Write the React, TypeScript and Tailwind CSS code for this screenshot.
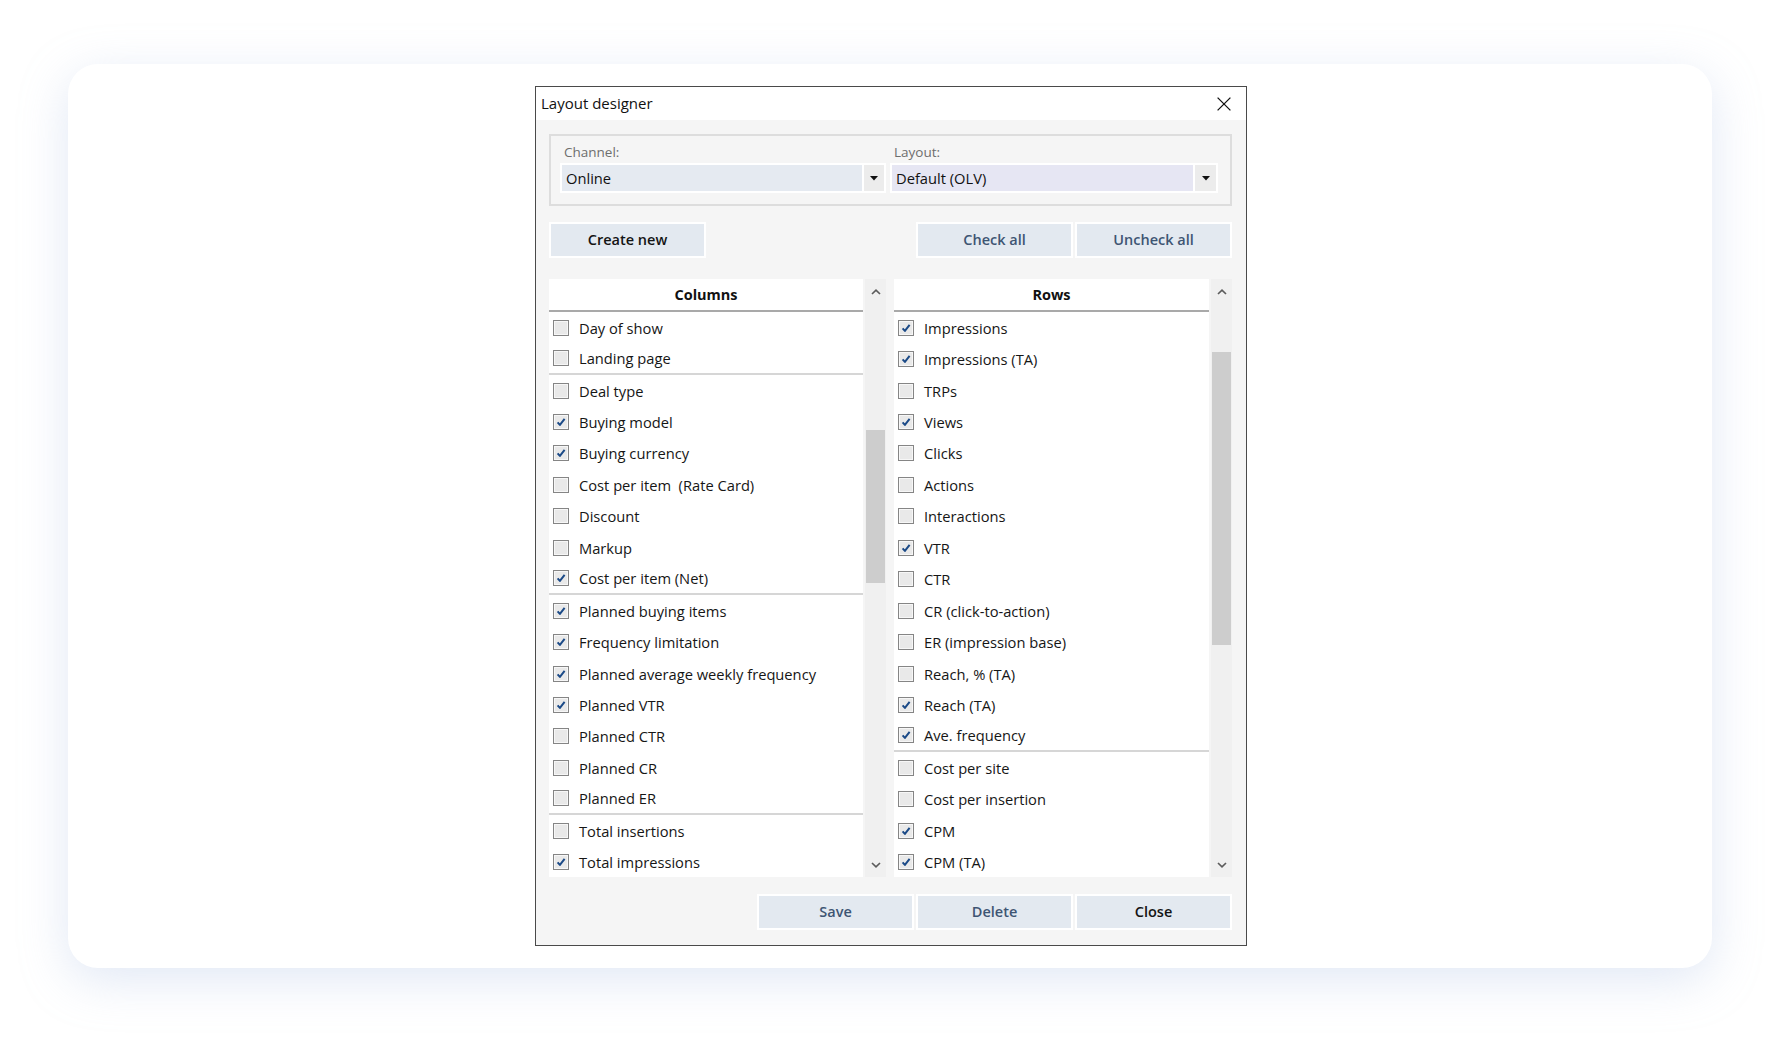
import React from "react";

type Item = { label: string; checked: boolean; sep?: boolean };

const columns: Item[] = [
  { label: "Day of show", checked: false },
  { label: "Landing page", checked: false, sep: true },
  { label: "Deal type", checked: false },
  { label: "Buying model", checked: true },
  { label: "Buying currency", checked: true },
  { label: "Cost per item  (Rate Card)", checked: false },
  { label: "Discount", checked: false },
  { label: "Markup", checked: false },
  { label: "Cost per item (Net)", checked: true, sep: true },
  { label: "Planned buying items", checked: true },
  { label: "Frequency limitation", checked: true },
  { label: "Planned average weekly frequency", checked: true },
  { label: "Planned VTR", checked: true },
  { label: "Planned CTR", checked: false },
  { label: "Planned CR", checked: false },
  { label: "Planned ER", checked: false, sep: true },
  { label: "Total insertions", checked: false },
  { label: "Total impressions", checked: true },
];

const rows: Item[] = [
  { label: "Impressions", checked: true },
  { label: "Impressions (TA)", checked: true },
  { label: "TRPs", checked: false },
  { label: "Views", checked: true },
  { label: "Clicks", checked: false },
  { label: "Actions", checked: false },
  { label: "Interactions", checked: false },
  { label: "VTR", checked: true },
  { label: "CTR", checked: false },
  { label: "CR (click-to-action)", checked: false },
  { label: "ER (impression base)", checked: false },
  { label: "Reach, % (TA)", checked: false },
  { label: "Reach (TA)", checked: true },
  { label: "Ave. frequency", checked: true, sep: true },
  { label: "Cost per site", checked: false },
  { label: "Cost per insertion", checked: false },
  { label: "CPM", checked: true },
  { label: "CPM (TA)", checked: true },
];

function CheckBox({ checked }: { checked: boolean }) {
  return (
    <span className="flex h-[16px] w-[16px] shrink-0 items-center justify-center border border-[#858585] bg-[#e9e9e9] shadow-[inset_0_0_0_1px_#f7f7f7]">
      {checked && (
        <svg width="12" height="12" viewBox="0 0 12 12">
          <path d="M2.6 6.3 L4.9 8.9 L9.6 2.9" fill="none" stroke="#1b4a87" strokeWidth="2" strokeLinejoin="round" />
        </svg>
      )}
    </span>
  );
}

function Row({ item }: { item: Item }) {
  return (
    <div
      className={
        item.sep
          ? "flex h-[31.45px] shrink-0 items-center gap-[10px] border-b-2 border-[#d6d6d6] pl-[4px]"
          : "flex h-[31.45px] shrink-0 items-center gap-[10px] pl-[4px]"
      }
    >
      <CheckBox checked={item.checked} />
      <span className="whitespace-pre text-[14.7px] text-[#161616]">{item.label}</span>
    </div>
  );
}

function Chevron({ up }: { up: boolean }) {
  return (
    <svg width="10" height="6" viewBox="0 0 10 6">
      <path d={up ? "M1 5 L5 1.2 L9 5" : "M1 1 L5 4.8 L9 1"} fill="none" stroke="#5c5c5c" strokeWidth="1.7" />
    </svg>
  );
}

function ListPanel({ title, items, wide }: { title: string; items: Item[]; wide?: boolean }) {
  return (
    <div className={wide ? "flex w-[315px] flex-col overflow-hidden bg-white" : "flex w-[314px] flex-col overflow-hidden bg-white"}>
      <div className="flex h-[31px] shrink-0 items-center justify-center text-[14.5px] font-bold text-[#111]">{title}</div>
      <div className="h-[2px] shrink-0 bg-[#a9a9a9]" />
      {items.map((it) => (
        <Row key={it.label} item={it} />
      ))}
    </div>
  );
}

function Btn({ label, dark }: { label: string; dark?: boolean }) {
  return (
    <div
      className={
        dark
          ? "flex h-[36px] w-[157px] items-center justify-center border-2 border-white bg-[#e3e9f0] text-[14.5px] font-semibold text-[#141414]"
          : "flex h-[36px] w-[157px] items-center justify-center border-2 border-white bg-[#e3e9f0] text-[14.5px] font-semibold text-[#3e5573]"
      }
    >
      {label}
    </div>
  );
}

function Arrow() {
  return (
    <svg width="8" height="5" viewBox="0 0 8 5">
      <path d="M0 0 H8 L4 4.6 Z" fill="#111" />
    </svg>
  );
}

export default function App() {
  return (
    <div className="h-[1040px] w-[1780px] bg-white pl-[68px] pt-[64px] font-['Open_Sans',sans-serif]">
      <div className="h-[904px] w-[1644px] rounded-[30px] bg-white pl-[467px] pt-[22px] shadow-[0_12px_48px_rgba(170,190,225,0.35)]">
        <div className="flex h-[860px] w-[712px] flex-col border border-[#4a4a4a] bg-[#f5f5f5]">
          {/* title bar */}
          <div className="flex h-[33px] shrink-0 items-center justify-between bg-white pl-[5px] pr-[15px]">
            <span className="text-[15px] text-[#111]">Layout designer</span>
            <svg width="14" height="14" viewBox="0 0 14 14">
              <path d="M0.6 0.6 L13.4 13.4 M13.4 0.6 L0.6 13.4" stroke="#111" strokeWidth="1.3" />
            </svg>
          </div>

          {/* body */}
          <div className="flex flex-1 flex-col pb-[15px] pl-[13px] pr-[14px] pt-[14px]">
            {/* group box */}
            <div className="flex h-[72px] shrink-0 gap-[4px] border-2 border-[#dddddd] pl-[9px] pr-[12px] pt-[7px]">
              <div className="flex flex-col">
                <div className="h-[18px] pl-[4px] text-[13.5px] leading-[18px] text-[#6e6e6e]">Channel:</div>
                <div className="mt-[2px] flex h-[30px] w-[326px] border-2 border-white">
                  <div className="flex flex-1 items-center bg-[#e5eaf1] pl-[4px] text-[14.7px] text-[#111]">Online</div>
                  <div className="flex w-[22px] items-center justify-center border-l-2 border-white bg-[#ececec]">
                    <Arrow />
                  </div>
                </div>
              </div>
              <div className="flex flex-col">
                <div className="h-[18px] pl-[4px] text-[13.5px] leading-[18px] text-[#6e6e6e]">Layout:</div>
                <div className="mt-[2px] flex h-[30px] w-[328px] border-2 border-white">
                  <div className="flex flex-1 items-center bg-[#e6e6f3] pl-[4px] text-[14.7px] text-[#111]">Default (OLV)</div>
                  <div className="flex w-[23px] items-center justify-center border-l-2 border-white bg-[#ececec]">
                    <Arrow />
                  </div>
                </div>
              </div>
            </div>

            {/* buttons row */}
            <div className="mt-[16px] flex h-[36px] shrink-0 justify-between">
              <Btn label="Create new" dark />
              <div className="flex gap-[2px]">
                <Btn label="Check all" />
                <Btn label="Uncheck all" />
              </div>
            </div>

            {/* lists */}
            <div className="mt-[21px] flex h-[598px] shrink-0">
              <ListPanel title="Columns" items={columns} />
              <div className="ml-[2px] flex w-[21px] flex-col bg-[#f0f0f0]">
                <div className="flex h-[24px] shrink-0 items-center justify-center pt-[2px]">
                  <Chevron up />
                </div>
                <div className="mx-[1px] mt-[127px] h-[153px] bg-[#cdcdcd]" />
                <div className="flex-1" />
                <div className="flex h-[22px] shrink-0 items-center justify-center pb-[2px]">
                  <Chevron up={false} />
                </div>
              </div>
              <div className="ml-[8px] flex">
                <ListPanel title="Rows" items={rows} wide />
              </div>
              <div className="ml-[2px] flex w-[21px] flex-col bg-[#f0f0f0]">
                <div className="flex h-[24px] shrink-0 items-center justify-center pt-[2px]">
                  <Chevron up />
                </div>
                <div className="mx-[1px] mt-[49px] h-[293px] bg-[#cdcdcd]" />
                <div className="flex-1" />
                <div className="flex h-[22px] shrink-0 items-center justify-center pb-[2px]">
                  <Chevron up={false} />
                </div>
              </div>
            </div>

            {/* bottom buttons */}
            <div className="mt-[17px] flex h-[36px] shrink-0 justify-end gap-[2px]">
              <Btn label="Save" />
              <Btn label="Delete" />
              <Btn label="Close" dark />
            </div>
          </div>
        </div>
      </div>
    </div>
  );
}
